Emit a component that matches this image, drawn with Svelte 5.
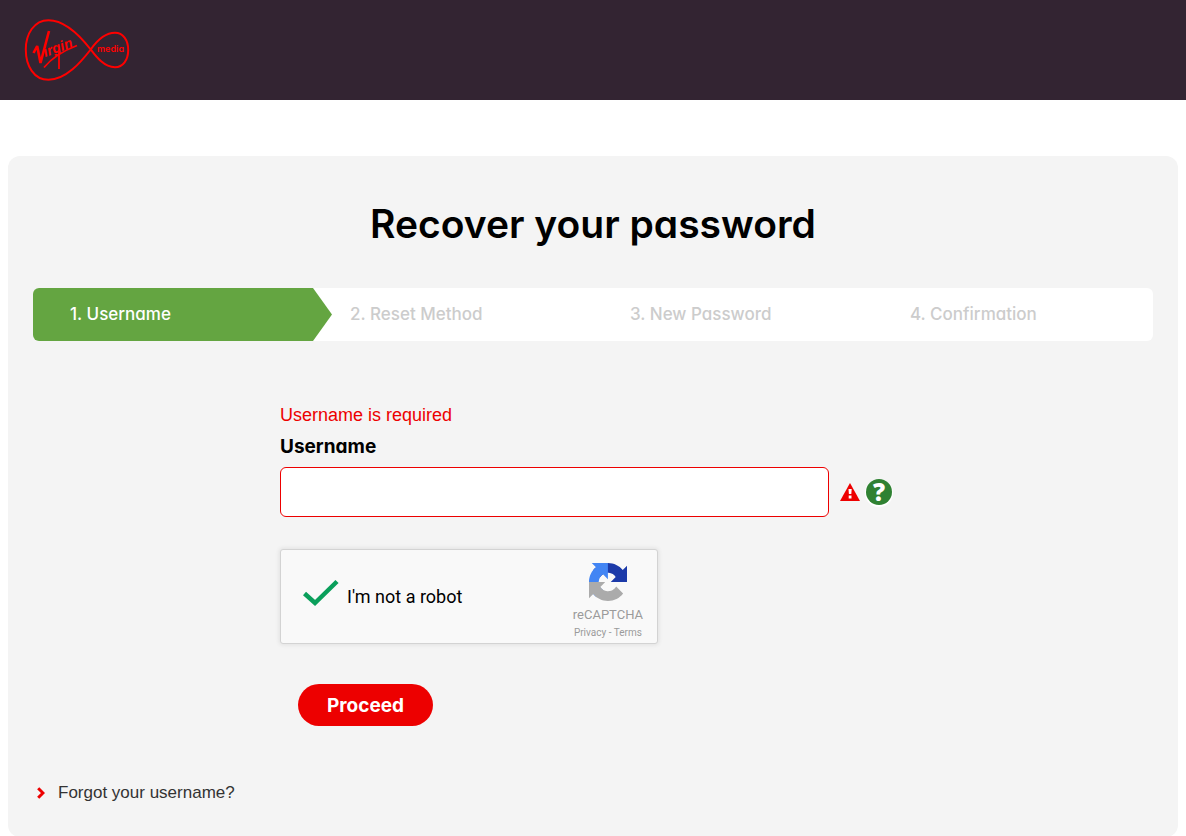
<script>
    const steps = [
        "Username",
        "Reset Method",
        "New Password",
        "Confirmation",
    ];
    let current = 0;

    let username = "";
    let notRobot = true;
    let submitted = true;

    $: error = submitted && !username ? "Username is required" : "";

    const handleSubmit = (event) => {
        event.preventDefault();
        submitted = true;
    };
</script>

<header class="header">
    <a class="logo" href="/" aria-label="Virgin Media">
        <svg width="106" height="64" viewBox="0 0 106 64" fill="none" stroke="#f00" stroke-width="2">
            <path d="M66.7 31.5C57 19 42 2.2 24.5 2.2C10 2.2 1.8 16 1.8 31.5C1.8 48 10 61.8 24.5 61.8C42 61.8 57 44 66.7 31.5C72 24 80 14.8 91 14.8C99 14.8 104.2 22 104.2 32C104.2 42 99 49.2 91 49.2C80 49.2 72 38.5 66.7 31.5Z" />
            <path d="M9.5 35L13.2 28L16.5 45L25 13" stroke-width="2.6" stroke-linejoin="bevel" />
            <path d="M20 49.500Q31 36 53 27.500M35 32V51" stroke-width="1.800" />
            <text class="script" transform="translate(21 39) rotate(-20)">irgin</text>
            <text class="media" x="73" y="34">media</text>
        </svg>
    </a>
</header>

<main class="panel">
    <h1>Recover your password</h1>

    <ol class="steps">
        {#each steps as step, i}
            <li class:active={i === current} aria-current={i === current ? "step" : undefined}>
                {i + 1}. {step}
            </li>
        {/each}
    </ol>

    <form novalidate on:submit={handleSubmit}>
        {#if error}
            <p class="error" id="username-error">{error}</p>
        {/if}
        <label class="label" for="username">Username</label>
        <div class="field">
            <input
                id="username"
                class="text"
                class:invalid={error}
                type="text"
                aria-describedby="username-error"
                bind:value={username}
            />
            {#if error}
                <svg class="warning" width="20" height="18" viewBox="0 0 20 18" aria-hidden="true">
                    <path d="M10 0L20 18H0Z" fill="#ed0000" />
                    <path d="M8.500 6h3.200l-.4 5h-2.400zM8.700 12.500h2.800v3h-2.800z" fill="#fff" />
                </svg>
            {/if}
            <button class="help" type="button" aria-label="Username help">?</button>
        </div>

        <div class="captcha">
            <label class="robot">
                <input type="checkbox" bind:checked={notRobot} />
                <svg width="36" height="36" viewBox="0 0 36 36" aria-hidden="true">
                    {#if notRobot}
                        <path d="M1.500 14.500L12 24L34 2.500" fill="none" stroke="#0a9f5b" stroke-width="4.500" />
                    {:else}
                        <rect x="5" y="5" width="26" height="26" rx="2" fill="#fff" stroke="#c1c1c1" stroke-width="2" />
                    {/if}
                </svg>
                <span>I'm not a robot</span>
            </label>
            <div class="brand">
                <svg width="38" height="38" viewBox="0 0 64 64" aria-hidden="true">
                    <path fill="#1c3aa9" d="M64 31.955l-.016-1.370V4.687l-7.160 7.160C50.965 4.674 42.033.093 32.030.093c-10.410 0-19.660 4.960-25.490 12.640l11.736 11.860a15.550 15.550 0 0 1 4.754-5.334c2.050-1.600 4.954-2.907 8.966-2.907.485 0 .859.057 1.133.163 4.970.392 9.280 3.135 11.816 7.116l-8.307 8.307L64 31.955" />
                    <path fill="#4285f4" d="M31.862.094l-1.370.016H4.594l7.160 7.160C4.580 13.130 0 22.060 0 32.064c0 10.410 4.960 19.660 12.640 25.490l11.860-11.736a15.550 15.550 0 0 1-5.334-4.754c-1.600-2.050-2.907-4.954-2.907-8.966 0-.485.057-.859.163-1.133.392-4.970 3.135-9.280 7.116-11.816l8.307 8.307L31.862.094" />
                    <path fill="#ababab" d="M.001 32.045l.016 1.370v25.898l7.160-7.160c5.860 7.174 14.790 11.754 24.793 11.754 10.410 0 19.660-4.960 25.490-12.640l-11.736-11.860a15.550 15.550 0 0 1-4.754 5.334c-2.050 1.600-4.954 2.907-8.966 2.907-.485 0-.859-.057-1.133-.163-4.970-.392-9.280-3.135-11.816-7.116l8.307-8.307L.001 32.045" />
                </svg>
                <span class="name">reCAPTCHA</span>
                <span class="legal"><a href="#privacy">Privacy</a> - <a href="#terms">Terms</a></span>
            </div>
        </div>

        <button class="proceed" type="submit">Proceed</button>
    </form>

    <a class="forgot" href="#forgot">
        <svg width="8" height="12" viewBox="0 0 8 12" aria-hidden="true">
            <path d="M1.200 1.200L6 6L1.200 10.800" fill="none" stroke="#ed0000" stroke-width="3" />
        </svg>
        Forgot your username?
    </a>
</main>

<style>
    :global(body) {
        --red: #ed0000;
        --display: Inter, "Liberation Sans", sans-serif;
        margin: 0;
        background: #fff;
        color: #000;
        font-family: "Liberation Sans", Arial, sans-serif;
    }

    * {
        box-sizing: border-box;
    }

    .header {
        display: flex;
        align-items: center;
        height: 100px;
        padding: 0 24px;
        background: #332432;
    }

    .logo {
        display: flex;
    }

    .script,
    .media {
        fill: #f00;
        stroke: none;
    }

    .script {
        font: italic bold 14px "Liberation Sans", Arial, sans-serif;
    }

    .media {
        font: 600 9px Inter, sans-serif;
        font-feature-settings: "cv11";
    }

    .panel {
        margin: 56px 8px 0;
        padding: 44px 25px 32px;
        border-radius: 12px;
        background: #f4f4f4;
    }

    h1,
    .steps,
    .label,
    .proceed {
        font-family: var(--display);
        font-feature-settings: "cv11";
    }

    h1 {
        margin: 0 0 40px;
        font-size: 39px;
        font-weight: 600;
        line-height: 48px;
        text-align: center;
    }

    .steps {
        display: grid;
        grid-template-columns: repeat(4, 1fr);
        margin: 0;
        padding: 0;
        border-radius: 6px;
        background: #fff;
        color: #ccc;
        font-size: 17px;
        font-weight: 500;
        line-height: 53px;
        list-style: none;
    }

    .steps li {
        position: relative;
        padding-left: 37px;
    }

    .steps .active {
        border-radius: 6px 0 0 6px;
        background: #64a541;
        color: #fff;
    }

    .active::after {
        content: "";
        position: absolute;
        top: 0;
        left: 100%;
        width: 19px;
        height: 100%;
        background: #64a541;
        clip-path: polygon(0 0, 100% 50%, 0 100%);
    }

    form {
        padding: 62px 0 0 247px;
    }

    .error {
        margin: 0;
        color: var(--red);
        font-size: 18px;
        line-height: 24px;
    }

    .label {
        display: block;
        margin: 8px 0;
        font-size: 19px;
        font-weight: 700;
        line-height: 24px;
    }

    .field {
        display: flex;
        align-items: center;
    }

    .text {
        flex: 0 1 549px;
        min-width: 0;
        height: 50px;
        padding: 0 12px;
        border: 1px solid #999;
        border-radius: 6px;
        background: #fff;
        font: 18px "Liberation Sans", Arial, sans-serif;
    }

    .invalid {
        border-color: var(--red);
    }

    .warning {
        margin: 0 6px 0 11px;
    }

    .help {
        width: 26px;
        height: 26px;
        padding: 0;
        border: 0;
        border-radius: 50%;
        background: #2f8132;
        box-shadow: 0 1px 1px 1px #fff;
        color: #fff;
        font: 800 24px/26px "Open Sans", sans-serif;
        cursor: pointer;
    }

    .captcha {
        display: flex;
        align-items: center;
        justify-content: space-between;
        max-width: 378px;
        height: 95px;
        margin-top: 32px;
        padding: 0 14px 0 22px;
        border: 1px solid #d3d3d3;
        border-radius: 3px;
        background: #f9f9f9;
        box-shadow: 0 0 4px 1px rgba(0, 0, 0, 0.08);
        font-family: Roboto, sans-serif;
    }

    .robot {
        display: flex;
        align-items: center;
        gap: 8px;
        font-size: 18px;
    }

    .robot input {
        appearance: none;
        position: absolute;
        width: 36px;
        height: 36px;
        margin: 0;
    }

    .brand {
        display: flex;
        flex-direction: column;
        align-items: center;
        padding-top: 10px;
        color: #9b9b9b;
    }

    .name {
        margin-top: 4px;
        font-size: 13px;
        line-height: 20px;
    }

    .legal {
        font-size: 10px;
        line-height: 16px;
    }

    .legal a {
        color: inherit;
        text-decoration: none;
    }

    .proceed {
        display: block;
        height: 42px;
        margin: 40px 0 0 18px;
        padding: 0 29px;
        border: 0;
        border-radius: 21px;
        background: var(--red);
        color: #fff;
        font-size: 19px;
        font-weight: 700;
        cursor: pointer;
    }

    .forgot {
        display: inline-flex;
        align-items: center;
        gap: 13px;
        margin: 55px 0 0 4px;
        color: #333;
        font-size: 17px;
        line-height: 24px;
        text-decoration: none;
    }
</style>
